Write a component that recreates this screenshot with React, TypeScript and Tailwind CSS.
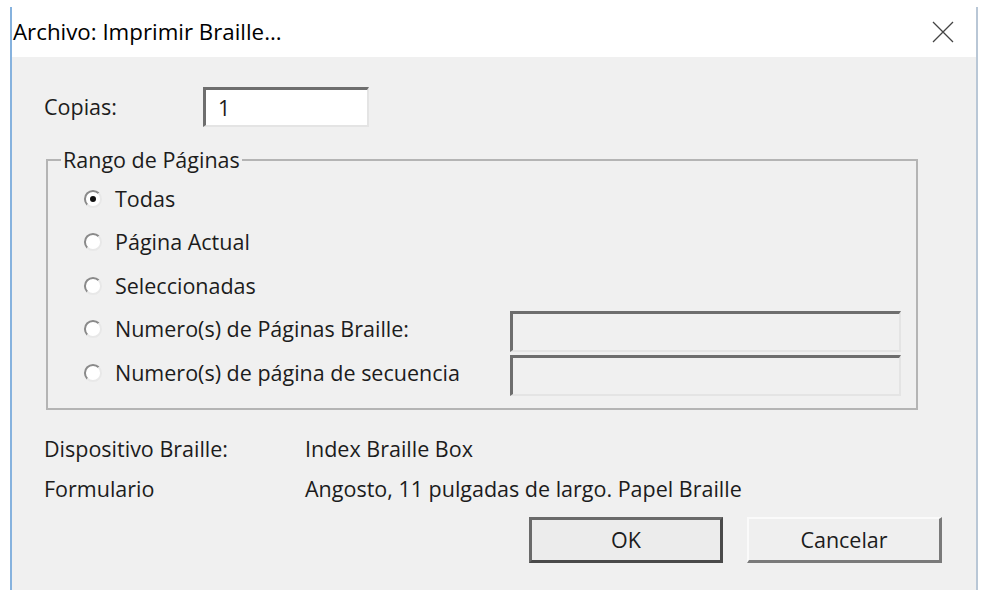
import React from "react";

const font = { fontFamily: '"Open Sans", "Noto Sans", sans-serif' };

function Radio({ checked }: { checked?: boolean }) {
  return (
    <svg width="20" height="20" viewBox="0 0 20 20" className="shrink-0">
      <circle cx="10" cy="10" r="8" fill="#ffffff" />
      <path d="M4.3 15.7 A8 8 0 0 1 15.7 4.3" fill="none" stroke="#8a8a8a" strokeWidth="2" />
      <path d="M15.7 4.3 A8 8 0 0 1 4.3 15.7" fill="none" stroke="#e8e8e8" strokeWidth="2" />
      {checked && <circle cx="10" cy="10" r="3" fill="#111111" />}
    </svg>
  );
}

function SunkenField({ white, children, className }: { white?: boolean; children?: React.ReactNode; className?: string }) {
  return (
    <div
      className={`border-t-[3px] border-l-[3px] border-r-2 border-b-2 border-t-[#6e6e6e] border-l-[#6e6e6e] border-r-[#e4e4e4] border-b-[#e4e4e4] flex items-center ${
        white ? "bg-white" : "bg-[#f0f0f0]"
      } ${className ?? ""}`}
    >
      {children}
    </div>
  );
}

const options: { label: string; checked?: boolean; field?: boolean }[] = [
  { label: "Todas", checked: true },
  { label: "Página Actual" },
  { label: "Seleccionadas" },
  { label: "Numero(s) de Páginas Braille:", field: true },
  { label: "Numero(s) de página de secuencia", field: true },
];

export default function App() {
  return (
    <div className="w-[986px] h-[590px] bg-white overflow-hidden text-[21.5px] leading-[30px] text-[#1c1c1c]" style={font}>
      <div className="ml-[10px] mt-[7px] w-[968px] h-[583px] flex flex-col border-l-2 border-r-2 border-l-[#86b2de] border-r-[#b9c7d6]">
        {/* title bar */}
        <div className="h-[50px] bg-white flex items-center justify-between pl-[1px] pr-[22px] shrink-0">
          <span className="text-[22.3px] text-black">Archivo: Imprimir Braille...</span>
          <svg width="22" height="22" viewBox="0 0 22 22">
            <path d="M1 1 L21 21 M21 1 L1 21" stroke="#444444" strokeWidth="1.3" />
          </svg>
        </div>

        {/* body */}
        <div className="flex-1 bg-[#f0f0f0] pl-[32px] pt-[30px] flex flex-col">
          <div className="flex items-center h-[40px]">
            <span className="w-[159px]">Copias:</span>
            <SunkenField white className="w-[166px] h-[40px] pl-[12px]">
              1
            </SunkenField>
          </div>

          <fieldset className="mt-[22px] ml-[2px] w-[872px] h-[261px] border-2 border-[#b4b4b4]">
            <legend className="ml-[13px] px-[2px] leading-[22px]">Rango de Páginas</legend>
            <div className="flex flex-col pt-[6px] pl-[35px]">
              {options.map((o) => (
                <div key={o.label} className="flex items-center h-[43.5px]">
                  <div className="w-[32px] flex items-center">
                    <Radio checked={o.checked} />
                  </div>
                  <span className="w-[395px] whitespace-nowrap">{o.label}</span>
                  {o.field && <SunkenField className="w-[391px] h-[41px] mt-[5px]" />}
                </div>
              ))}
            </div>
          </fieldset>

          <div className="mt-[24px] flex flex-col gap-[10px]">
            <div className="flex items-center h-[30px]">
              <span className="w-[261px]">Dispositivo Braille:</span>
              <span>Index Braille Box</span>
            </div>
            <div className="flex items-center h-[30px]">
              <span className="w-[261px]">Formulario</span>
              <span>Angosto, 11 pulgadas de largo. Papel Braille</span>
            </div>
          </div>

          <div className="mt-[13px] flex gap-[24px] pl-[485px]">
            <button className="w-[194px] h-[46px] bg-[#ececec] border-[3px] border-t-[#6a6a6a] border-l-[#6a6a6a] border-r-[#4a4a4a] border-b-[#4a4a4a] flex items-center justify-center">
              OK
            </button>
            <button className="w-[195px] h-[46px] bg-[#efefef] border-t-2 border-l-2 border-r-[3px] border-b-[3px] border-t-[#fafafa] border-l-[#fafafa] border-r-[#7a7a7a] border-b-[#7a7a7a] flex items-center justify-center">
              Cancelar
            </button>
          </div>
        </div>
      </div>
    </div>
  );
}
